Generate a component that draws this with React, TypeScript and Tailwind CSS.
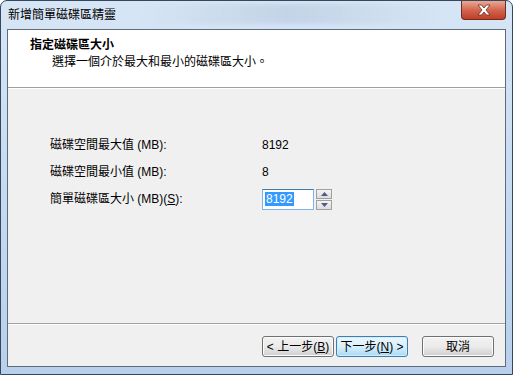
import React from "react";

const font = { fontFamily: '"Liberation Sans", "Noto Sans CJK TC", sans-serif' };

function WinButton({
  children,
  primary,
  className,
}: {
  children: React.ReactNode;
  primary?: boolean;
  className?: string;
}) {
  return (
    <div
      className={
        "h-[21px] w-[72px] rounded-[3px] border flex items-center justify-center text-[12px] leading-none text-black " +
        (primary
          ? "border-[#3c7fb1] bg-gradient-to-b from-[#eaf6fd] via-[#d9f0fc] to-[#a7d9f5] shadow-[inset_0_0_0_1px_#d4ecfb] "
          : "border-[#707070] bg-gradient-to-b from-[#f2f2f2] via-[#ebebeb] to-[#cfcfcf] shadow-[inset_0_0_0_1px_#fcfcfc] ") +
        (className ?? "")
      }
    >
      {children}
    </div>
  );
}

function Spinner() {
  return (
    <div className="flex flex-col gap-[1px] ml-[2px]">
      <div className="w-[16px] h-[10px] border border-[#a0a0a0] bg-gradient-to-b from-[#f4f4f4] to-[#dcdcdc] flex items-center justify-center">
        <svg width="7" height="4" viewBox="0 0 7 4">
          <path d="M3.5 0 L7 4 L0 4 Z" fill="#4c5a8c" />
        </svg>
      </div>
      <div className="w-[16px] h-[10px] border border-[#a0a0a0] bg-gradient-to-b from-[#f4f4f4] to-[#dcdcdc] flex items-center justify-center">
        <svg width="7" height="4" viewBox="0 0 7 4">
          <path d="M0 0 L7 0 L3.5 4 Z" fill="#4c5a8c" />
        </svg>
      </div>
    </div>
  );
}

export default function App() {
  return (
    <div
      className="w-[513px] h-[375px] flex flex-col rounded-t-[7px] border border-[#35475c] bg-gradient-to-b from-[#d7e6f6] via-[#c6dbf1] to-[#b8d0ec] overflow-hidden"
      style={font}
    >
      {/* title bar */}
      <div className="h-[28px] flex items-start justify-between relative">
        <div className="pl-[7px] pt-[7px] text-[12px] leading-[14px] text-black">新增簡單磁碟區精靈</div>
        <div className="absolute left-[140px] top-[3px] w-[300px] h-[20px] bg-gradient-to-r from-transparent via-[#b6c8dc]/60 to-transparent blur-[2px]" />
        <div className="mr-[6px] w-[45px] h-[19px] rounded-b-[4px] border border-t-0 border-[#6d2c22] bg-gradient-to-b from-[#e9a994] via-[#d2664f] to-[#c23c24] flex items-center justify-center relative">
          <svg width="14" height="12" viewBox="0 0 14 12">
            <path
              d="M1 1 L4.5 1 L7 4 L9.5 1 L13 1 L9 6 L13 11 L9.5 11 L7 8 L4.5 11 L1 11 L5 6 Z"
              fill="#ffffff"
              stroke="#6b2b20"
              strokeWidth="0.8"
            />
          </svg>
        </div>
      </div>

      {/* client */}
      <div className="mx-[6px] mb-[7px] flex-1 flex flex-col border border-[#5d6b7a] bg-[#f0f0f0]">
        {/* header */}
        <div className="h-[58px] bg-white border-b border-[#a0a0a0] pt-[8px]">
          <div className="pl-[22px] text-[12px] leading-[14px] font-bold text-black">指定磁碟區大小</div>
          <div className="pl-[44px] mt-[3px] text-[12px] leading-[14px] text-black">選擇一個介於最大和最小的磁碟區大小。</div>
        </div>
        <div className="h-px bg-white" />

        {/* body */}
        <div className="flex-1 pl-[42px] pt-[45px] flex flex-col gap-[5px] text-[12px] text-black">
          <div className="h-[22px] flex items-center">
            <div className="w-[212px]">磁碟空間最大值 (MB):</div>
            <div>8192</div>
          </div>
          <div className="h-[22px] flex items-center">
            <div className="w-[212px]">磁碟空間最小值 (MB):</div>
            <div>8</div>
          </div>
          <div className="h-[22px] flex items-center">
            <div className="w-[212px]">
              簡單磁碟區大小 (MB)(<span className="underline">S</span>):
            </div>
            <div className="flex items-center">
              <div className="w-[52px] h-[21px] border border-[#7eb4ea] border-t-[#3d7bad] bg-white flex items-center pl-[2px]">
                <span className="bg-[#3399ff] text-white leading-[14px] px-px">8192</span>
              </div>
              <Spinner />
            </div>
          </div>
        </div>

        {/* footer */}
        <div className="h-px bg-[#a0a0a0]" />
        <div className="h-px bg-white" />
        <div className="h-[41px] flex items-start justify-end pt-[11px] pr-[11px]">
          <WinButton>&lt; 上一步(<span className="underline">B</span>)</WinButton>
          <WinButton primary className="ml-[2px]">
            下一步(<span className="underline">N</span>) &gt;
          </WinButton>
          <WinButton className="ml-[14px]">取消</WinButton>
        </div>
      </div>
    </div>
  );
}
